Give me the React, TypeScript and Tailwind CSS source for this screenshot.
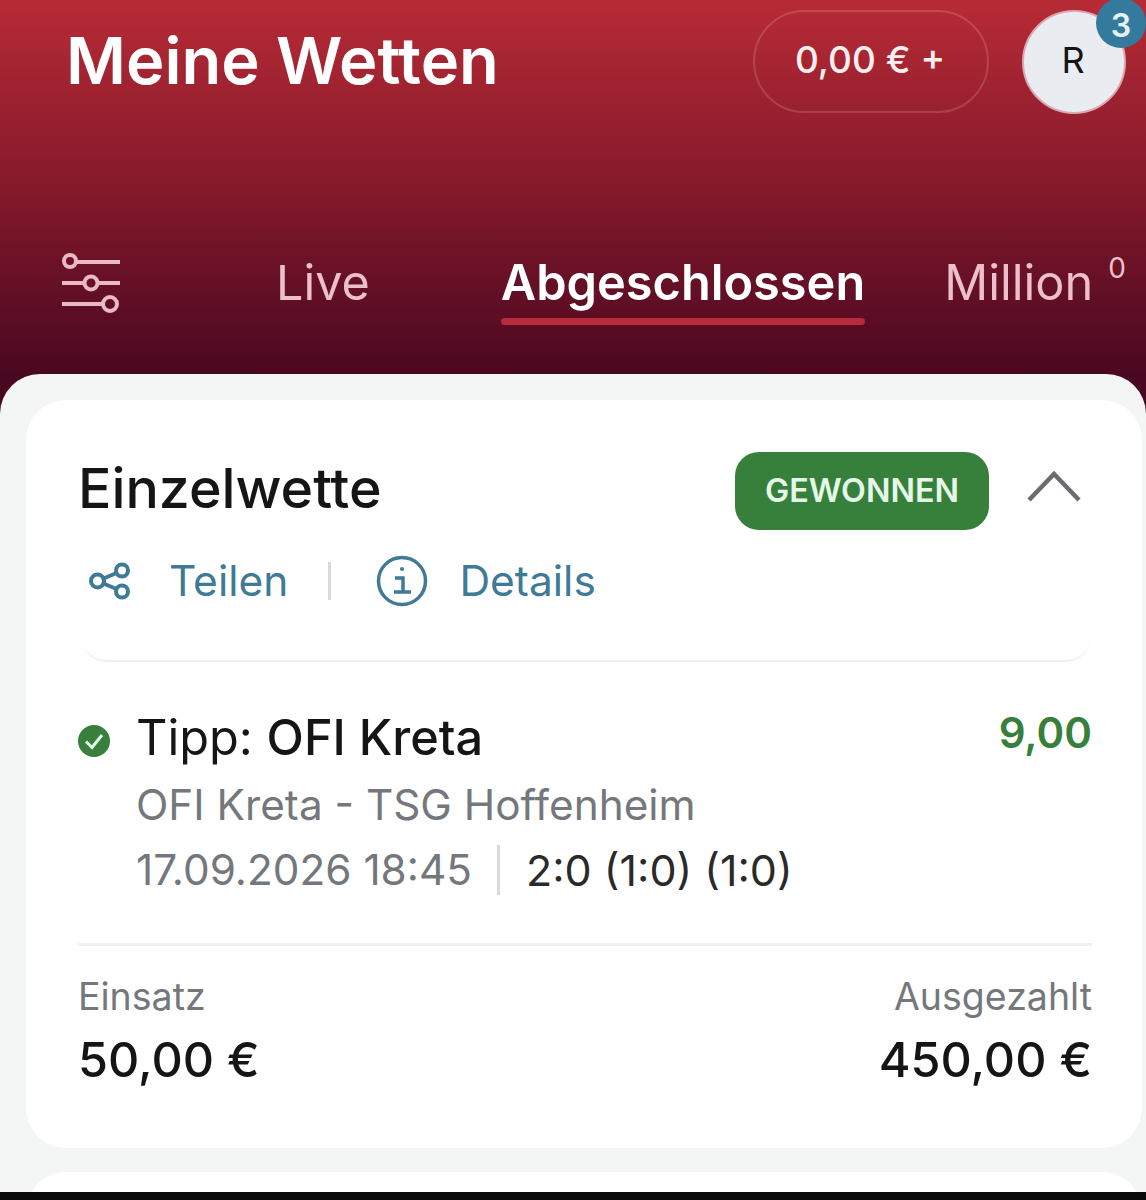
export default function App() {
  return (
    <div className="relative flex h-[1200px] w-[1146px] flex-col overflow-hidden bg-[#0a0a0a] font-['Inter',sans-serif]">
      <div className="relative h-[1192px] overflow-hidden bg-[#4a0820] bg-gradient-to-b from-[#b72b36] via-[#85192a] to-[#4a0820] bg-[length:100%_374px] bg-no-repeat">
        <header className="flex h-[224px] items-start pl-[66px] pr-[20px] pt-[10px]">
          <h1 className="mt-[15px] text-[65px] font-semibold leading-[72px] text-white">Meine Wetten</h1>
          <div className="ml-auto flex items-start gap-[33px]">
            <div className="flex h-[103px] w-[236px] items-center justify-center rounded-full border-2 border-white/15 pb-[4px] pr-[2px] text-[37px] font-medium text-[#fdeef0]">0,00 € +</div>
            <div className="relative flex h-[104px] w-[104px] items-center justify-center rounded-full border-2 border-[#d9a8b0] bg-[#e9edf1] pb-[4px] pr-[2px] text-[36px] text-[#151515]">
              R
              <span className="absolute right-[-22px] top-[-14px] flex h-[50px] w-[50px] items-center justify-center rounded-full bg-[#347a9c] pt-[5px] text-[32px] font-semibold leading-none text-[#e6f1f5]">3</span>
            </div>
          </div>
        </header>
        <nav className="flex h-[150px] items-start pl-[60px]">
          <svg className="mt-[28px]" width="62" height="62" viewBox="0 0 62 62" fill="none" stroke="#e9b9c5" strokeWidth="4">
            <circle cx="10" cy="9" r="6" />
            <path d="M17 10h43" />
            <path d="M2 31h21M39 31h21" />
            <circle cx="31" cy="31" r="6.5" />
            <path d="M2 52h41" />
            <circle cx="50" cy="52" r="7" />
          </svg>
          <span className="ml-[154px] mt-[30px] text-[48.5px] leading-[58px] text-[#edbfcb]">Live</span>
          <div className="ml-[131px] mt-[30px] flex flex-col">
            <span className="text-[48.7px] font-semibold leading-[58px] text-white">Abgeschlossen</span>
            <span className="mt-[6px] h-[7px] rounded-full bg-[#b72b3b]" />
          </div>
          <span className="ml-[79px] mt-[30px] text-[48.7px] leading-[58px] text-[#edbfcb]">Million</span>
          <span className="ml-[15px] mt-[26px] text-[28px] leading-[36px] text-[#edbfcb]">0</span>
        </nav>
        <main className="h-[818px] rounded-t-[40px] bg-[#f4f5f5] pl-[26px] pr-[4px] pt-[26px]">
          <section className="h-[748px] rounded-[40px] bg-white pl-[52px] pr-[50px] pt-[52px]">
            <div className="flex h-[78px] items-center">
              <h2 className="pb-[6px] text-[55.5px] font-medium leading-none text-[#151515]">Einzelwette</h2>
              <span className="ml-auto flex h-[78px] w-[254px] items-center justify-center rounded-[24px] bg-[#36803c] text-[32.3px] font-semibold text-[#e5f7e8]">GEWONNEN</span>
              <svg className="mb-[8px] ml-[38px] mr-[11px]" width="54" height="34" viewBox="0 0 54 34" fill="none" stroke="#696c70" strokeWidth="4.5">
                <path d="M2 30 27 4l25 26" />
              </svg>
            </div>
            <div className="mt-[11px] flex h-[80px] items-center pl-[11px] text-[42.5px] leading-none text-[#3f7a97]">
              <svg width="44" height="40" viewBox="0 0 44 40" fill="none" stroke="#3f7a97" strokeWidth="4">
                <circle cx="8.5" cy="20" r="6.5" />
                <circle cx="33" cy="9.5" r="6" />
                <circle cx="33" cy="30.5" r="6" />
                <path d="M14.5 17.5 27.5 12M14.5 22.5l13 5.5" />
              </svg>
              <span className="ml-[36px]">Teilen</span>
              <span className="ml-[40px] h-[38px] w-[3px] bg-[#d7d9db]" />
              <svg className="ml-[45px]" width="52" height="52" viewBox="0 0 52 52" fill="none" stroke="#3f7a97" strokeWidth="3.5">
                <circle cx="26" cy="26" r="23.5" />
                <path d="M19 23h8v14M18 37h17" />
                <circle cx="26" cy="14" r="2" fill="#3f7a97" stroke="none" />
              </svg>
              <span className="ml-[31px]">Details</span>
            </div>
            <div className="ml-[4px] mr-[2px] h-[41px] rounded-b-[24px] border-b-2 border-[#eff0f0]" />
            <div className="mt-[47px] flex items-start">
              <svg className="mt-[16px] shrink-0" width="32" height="32" viewBox="0 0 32 32">
                <circle cx="16" cy="16" r="16" fill="#36803c" />
                <path d="M8 16.5l6 6L24 10" fill="none" stroke="#e5f7e8" strokeWidth="3" />
              </svg>
              <div className="ml-[26px] flex-1">
                <div className="text-[48.7px] leading-[58px] text-[#151515]">Tipp: <span className="font-medium">OFI Kreta</span></div>
                <div className="mt-[13px] text-[42.3px] leading-[50px] text-[#74787c]">OFI Kreta - TSG Hoffenheim</div>
                <div className="mt-[15px] flex items-center text-[42.3px] leading-[50px]">
                  <span className="text-[#74787c]">17.09.2026 18:45</span>
                  <span className="ml-[25px] h-[50px] w-[3px] bg-[#d7d9db]" />
                  <span className="ml-[26px] text-[43px] text-[#2a2a2a]">2:0 (1:0) (1:0)</span>
                </div>
              </div>
              <span className="mt-[-5px] text-[42px] font-semibold leading-[58px] text-[#36803c]">9,00</span>
            </div>
            <div className="mt-[48px] h-[3px] bg-[#eff0f0]" />
            <div className="mt-[29px] flex justify-between">
              <div>
                <div className="text-[37.5px] leading-[44px] text-[#74787c]">Einsatz</div>
                <div className="mt-[13px] text-[48.5px] font-medium leading-[56px] text-[#151515]">50,00 €</div>
              </div>
              <div className="text-right">
                <div className="text-[37.5px] leading-[44px] text-[#74787c]">Ausgezahlt</div>
                <div className="mt-[13px] text-[48.5px] font-medium leading-[56px] text-[#151515]">450,00 €</div>
              </div>
            </div>
          </section>
          <section className="mt-[24px] h-[100px] rounded-[40px] bg-white" />
        </main>
      </div>
    </div>
  );
}
